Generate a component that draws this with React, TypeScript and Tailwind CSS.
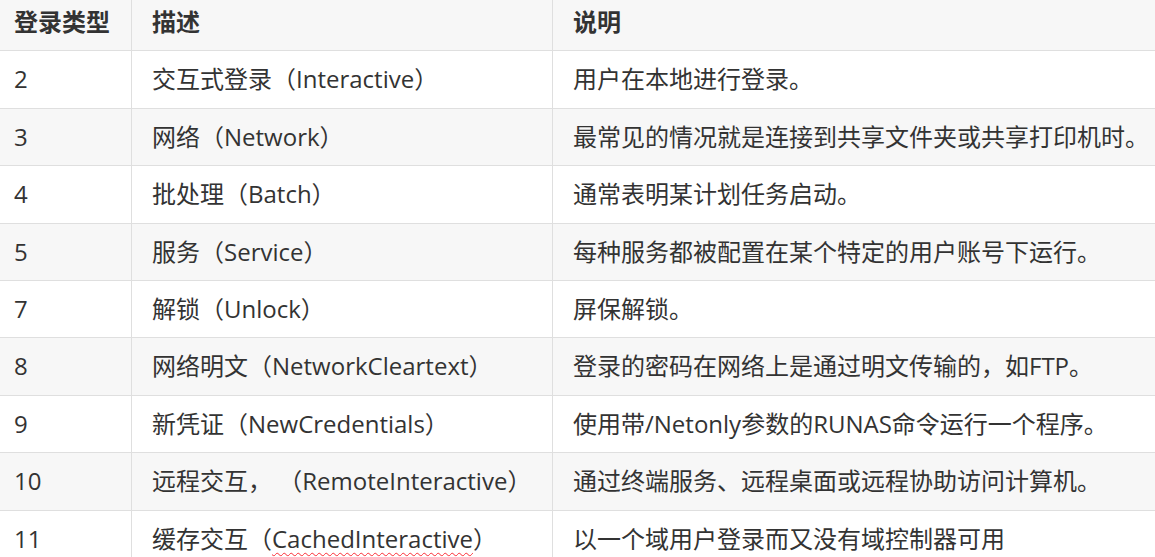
import type { ReactNode } from "react"

const rows: { type: string; desc: ReactNode; note: string }[] = [
	{ type: "2", desc: "交互式登录（Interactive）", note: "用户在本地进行登录。" },
	{ type: "3", desc: "网络（Network）", note: "最常见的情况就是连接到共享文件夹或共享打印机时。" },
	{ type: "4", desc: "批处理（Batch）", note: "通常表明某计划任务启动。" },
	{ type: "5", desc: "服务（Service）", note: "每种服务都被配置在某个特定的用户账号下运行。" },
	{ type: "7", desc: "解锁（Unlock）", note: "屏保解锁。" },
	{ type: "8", desc: "网络明文（NetworkCleartext）", note: "登录的密码在网络上是通过明文传输的，如FTP。" },
	{ type: "9", desc: "新凭证（NewCredentials）", note: "使用带/Netonly参数的RUNAS命令运行一个程序。" },
	{ type: "10", desc: "远程交互， （RemoteInteractive）", note: "通过终端服务、远程桌面或远程协助访问计算机。" },
	{
		type: "11",
		desc: (
			<>
				缓存交互（
				<span className="underline decoration-wavy decoration-red-500 decoration-1 underline-offset-4">
					CachedInteractive
				</span>
				）
			</>
		),
		note: "以一个域用户登录而又没有域控制器可用",
	},
]

const cell = "border border-[#dfdfdf] px-[20px] py-[9px] text-left align-middle whitespace-nowrap"

export default function App() {
	return (
		<div className="w-[1155px] h-[557px] overflow-hidden bg-white">
			<table
				className="-mt-[7px] -ml-[7px] w-[1220px] border-collapse text-[24px] leading-[1.6] text-[#333333] table-fixed"
				style={{ fontFamily: '"Open Sans", "Noto Sans CJK SC", sans-serif' }}>
				<colgroup>
					<col className="w-[138px]" />
					<col className="w-[421px]" />
					<col className="w-[661px]" />
				</colgroup>
				<thead>
					<tr className="bg-[#f7f7f7]">
						<th className={`${cell} font-bold`}>登录类型</th>
						<th className={`${cell} font-bold`}>描述</th>
						<th className={`${cell} font-bold`}>说明</th>
					</tr>
				</thead>
				<tbody>
					{rows.map((r, i) => (
						<tr key={r.type} className={i % 2 === 1 ? "bg-[#f7f7f7]" : "bg-white"}>
							<td className={cell}>{r.type}</td>
							<td className={cell}>{r.desc}</td>
							<td className={cell}>{r.note}</td>
						</tr>
					))}
				</tbody>
			</table>
		</div>
	)
}
